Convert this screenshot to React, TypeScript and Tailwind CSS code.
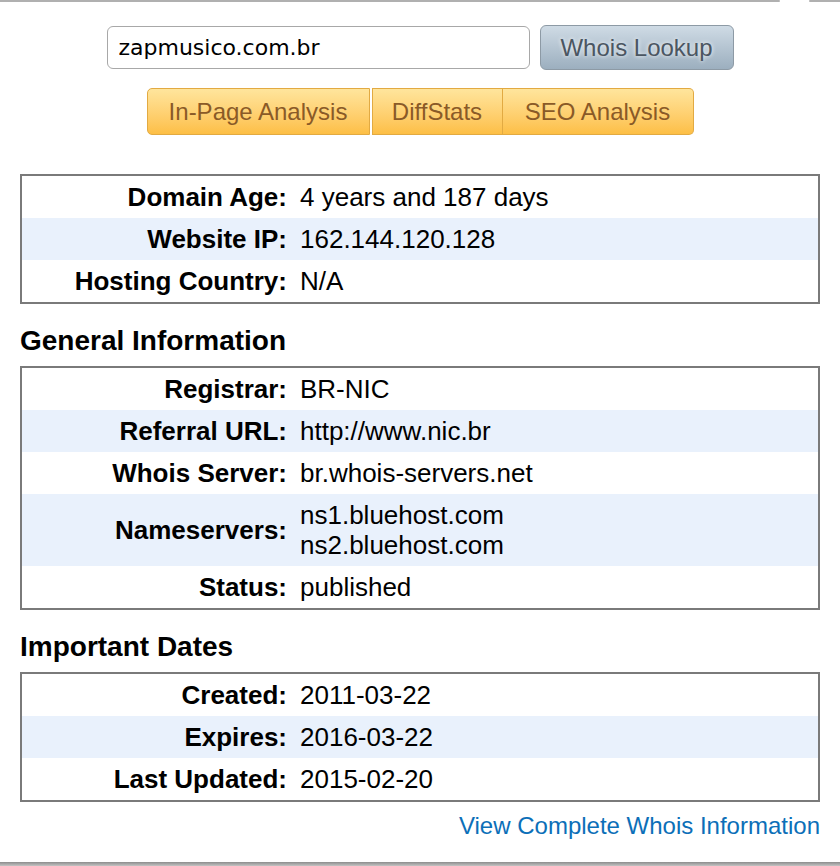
import React from "react";

type Row = {
  label: string;
  value: string[];
};

const summary: Row[] = [
  { label: "Domain Age:", value: ["4 years and 187 days"] },
  { label: "Website IP:", value: ["162.144.120.128"] },
  { label: "Hosting Country:", value: ["N/A"] },
];

const general: Row[] = [
  { label: "Registrar:", value: ["BR-NIC"] },
  { label: "Referral URL:", value: ["http://www.nic.br"] },
  { label: "Whois Server:", value: ["br.whois-servers.net"] },
  { label: "Nameservers:", value: ["ns1.bluehost.com", "ns2.bluehost.com"] },
  { label: "Status:", value: ["published"] },
];

const dates: Row[] = [
  { label: "Created:", value: ["2011-03-22"] },
  { label: "Expires:", value: ["2016-03-22"] },
  { label: "Last Updated:", value: ["2015-02-20"] },
];

// striped info box, label column right aligned
function InfoTable({ rows }: { rows: Row[] }) {
  return (
    <div className="border-2 border-[#7a7a7a]">
      {rows.map((row, i) => (
        <div
          key={row.label}
          className={
            i % 2 === 1
              ? "flex items-center py-[6px] bg-[#e9f1fc]"
              : "flex items-center py-[6px] bg-white"
          }
        >
          <div className="w-[265px] text-right font-bold leading-[30px]">
            {row.label}
          </div>
          <div className="pl-[13px] leading-[30px]">
            {row.value.map((v) => (
              <div key={v}>{v}</div>
            ))}
          </div>
        </div>
      ))}
    </div>
  );
}

export default function App() {
  return (
    <div className="w-[840px] h-[866px] bg-white flex flex-col overflow-hidden text-black font-['Liberation_Sans',Arial,sans-serif]">
      {/* window frame edge */}
      <div className="flex h-[2px]">
        <div className="w-[780px] bg-[#b0b0b0] rounded-r-full" />
        <div className="flex-1 ml-[29px] bg-[#b0b0b0] rounded-l-full" />
      </div>

      {/* lookup form */}
      <div className="flex justify-center items-center gap-[10px] mt-[23px]">
        <input
          type="text"
          defaultValue="zapmusico.com.br"
          className="w-[423px] h-[43px] rounded-[6px] border-[1.5px] border-[#a8a8a8] pl-[11px] text-[22px] text-black outline-none font-['DejaVu_Sans',sans-serif]"
        />
        <button className="w-[194px] h-[45px] rounded-[6px] border-[1.5px] border-[#8d9aa5] bg-gradient-to-b from-[#cfdbe5] to-[#9cafbf] text-[24px] text-[#4b5662] [text-shadow:0_0_4px_#ffffff]">
          Whois Lookup
        </button>
      </div>

      {/* analysis buttons */}
      <div className="flex justify-center mt-[18px]">
        <div className="flex h-[47px] text-[24px] text-[#8a5a27] [text-shadow:0_0_4px_#fff4d0]">
          <button className="w-[223px] rounded-l-[5px] border-[1.5px] border-[#e2aa42] bg-gradient-to-b from-[#ffe59c] to-[#fdbf45]">
            In-Page Analysis
          </button>
          <button className="w-[131px] ml-[2px] border-[1.5px] border-[#e2aa42] bg-gradient-to-b from-[#ffe59c] to-[#fdbf45]">
            DiffStats
          </button>
          <button className="w-[191px] rounded-r-[5px] border-[1.5px] border-l-0 border-[#e2aa42] bg-gradient-to-b from-[#ffe59c] to-[#fdbf45]">
            SEO Analysis
          </button>
        </div>
      </div>

      <div className="px-[20px] mt-[39px] text-[26px]">
        <InfoTable rows={summary} />

        <h2 className="mt-[20px] mb-[8px] text-[28px] font-bold leading-[34px]">
          General Information
        </h2>
        <InfoTable rows={general} />

        <h2 className="mt-[20px] mb-[8px] text-[28px] font-bold leading-[34px]">
          Important Dates
        </h2>
        <InfoTable rows={dates} />

        <div className="mt-[9px] text-right text-[24px] leading-[30px]">
          <a href="#" className="text-[#0c6fb8]">
            View Complete Whois Information
          </a>
        </div>
      </div>

      <div className="flex-1" />
      <div className="h-[4px] bg-gradient-to-b from-[#8c8c8c] to-[#c4c4c4]" />
    </div>
  );
}
